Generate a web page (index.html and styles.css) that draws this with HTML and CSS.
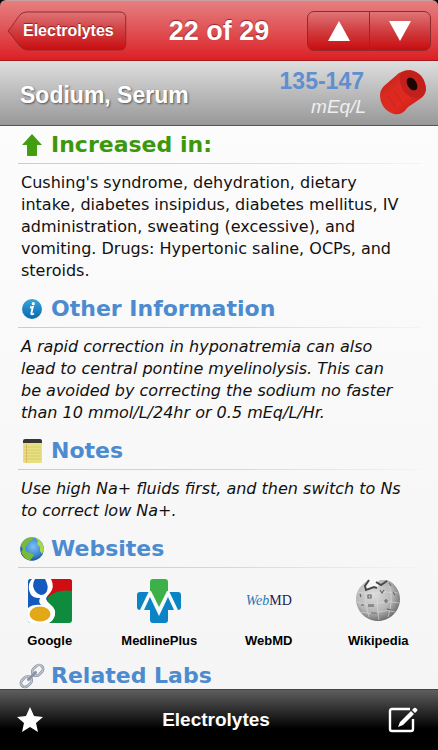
FILE: index.html
```html
<!DOCTYPE html>
<html lang="en">
<head>
    <meta charset="UTF-8">
    <meta name="viewport" content="width=device-width, initial-scale=1.0">
    <title>Sodium, Serum</title>
    <link rel="stylesheet" href="styles.css">
</head>
<body>
    <header class="navbar">
        <button class="back" type="button">
            <svg class="back-shape" viewBox="0 0 121 40" preserveAspectRatio="none" aria-hidden="true">
                <defs>
                    <linearGradient id="backFill" x1="0" y1="0" x2="0" y2="1">
                        <stop offset="0" stop-color="#df7476"/>
                        <stop offset="0.5" stop-color="#d13d40"/>
                        <stop offset="1" stop-color="#c90d10"/>
                    </linearGradient>
                </defs>
                <path d="M1 20C6 15 9 8 14 3Q17 1 20 1H114Q120 1 120 7V33Q120 39 114 39H20Q17 39 14 36C9 31 6 25 1 20Z" fill="url(#backFill)" stroke="#94292b" stroke-width="1"/>
            </svg>
            <span>Electrolytes</span>
        </button>
        <h1>22 of 29</h1>
        <div class="stepper">
            <button type="button" aria-label="Previous">
                <svg width="24" height="22" viewBox="0 0 24 22"><path d="M12 1L23 21H1Z" fill="#fff"/></svg>
            </button>
            <button type="button" aria-label="Next">
                <svg width="24" height="22" viewBox="0 0 24 22"><path d="M1 1H23L12 21Z" fill="#fff"/></svg>
            </button>
        </div>
    </header>

    <section class="lab">
        <h2>Sodium, Serum</h2>
        <div class="range">
            <strong>135-147</strong>
            <em>mEq/L</em>
        </div>
        <svg width="46" height="46" viewBox="0 0 46 46" aria-hidden="true">
            <defs>
                <linearGradient id="tubeFill" x1="0" y1="0" x2="1" y2="1">
                    <stop offset="0" stop-color="#b81c18"/>
                    <stop offset="0.35" stop-color="#d92a21"/>
                    <stop offset="0.6" stop-color="#e0291f"/>
                    <stop offset="1" stop-color="#b81613"/>
                </linearGradient>
            </defs>
            <path d="M0 26Q0 20 4 16L19 3Q24 0 30 0Q37 1 41 6Q46 13 46 20Q45 26 40 29L28 37Q25 41 22 43Q18 45 14 44Q7 42 3 36Q0 31 0 26Z" fill="url(#tubeFill)"/>
            <path d="M23 2C28 -1 37 1 42 7C47 14 47 24 41 27C34 30 26 26 22 18C19 11 19 5 23 2Z" fill="#c4201b"/>
            <path d="M8 26L16 38M14 21L23 34" stroke="#c4201b" stroke-width="1" opacity="0.6"/>
            <ellipse cx="32" cy="14" rx="4.500" ry="7" transform="rotate(-33 32 14)" fill="#1d0505"/>
        </svg>
    </section>

    <main class="content">
        <h3 class="heading increased">
            <svg class="icon" viewBox="0 0 24 24" aria-hidden="true">
                <path d="M12 1L22 12H17V22Q17 23 16 23H8Q7 23 7 22V12H2Z" fill="#429d10"/>
            </svg>
            Increased in:
        </h3>
        <p>Cushing's syndrome, dehydration, dietary intake, diabetes insipidus, diabetes mellitus, IV administration, sweating (excessive), and vomiting. Drugs: Hypertonic saline, OCPs, and steroids.</p>

        <h3 class="heading">
            <svg class="icon" viewBox="0 0 24 24" aria-hidden="true">
                <defs>
                    <linearGradient id="infoFill" x1="0" y1="0" x2="0" y2="1">
                        <stop offset="0" stop-color="#38a5dc"/>
                        <stop offset="1" stop-color="#0b67ad"/>
                    </linearGradient>
                </defs>
                <circle cx="12" cy="12" r="10" fill="url(#infoFill)"/>
                <circle cx="13.300" cy="6.700" r="1.600" fill="#fff"/>
                <path d="M10 10.500L12.800 10L11.300 16.500Q11.300 18 14 16.500" fill="none" stroke="#fff" stroke-width="1.900"/>
            </svg>
            Other Information
        </h3>
        <p class="note">A rapid correction in hyponatremia can also lead to central pontine myelinolysis. This can be avoided by correcting the sodium no faster than 10 mmol/L/24hr or 0.5 mEq/L/Hr.</p>

        <h3 class="heading">
            <svg class="icon" viewBox="0 0 24 24" aria-hidden="true">
                <rect x="3" y="1" width="19" height="23" rx="1.500" fill="#e8e07f"/>
                <path d="M4 8H21M4 11H21M4 14H21M4 17H21M4 20H21" stroke="#c9c56b" stroke-width="0.700"/>
                <path d="M6.500 5V24" stroke="#dda956" stroke-width="0.700"/>
                <path d="M3 4V2Q3 0 5 0H20Q22 0 22 2V4Z" fill="#393534"/>
            </svg>
            Notes
        </h3>
        <p class="note">Use high Na+ fluids first, and then switch to Ns to correct low Na+.</p>

        <h3 class="heading">
            <svg class="icon" viewBox="0 0 24 24" aria-hidden="true">
                <defs>
                    <radialGradient id="sea" cx="0.55" cy="0.4" r="0.6">
                        <stop offset="0" stop-color="#7dc2f3"/>
                        <stop offset="0.7" stop-color="#3782ce"/>
                        <stop offset="1" stop-color="#1b4c8d"/>
                    </radialGradient>
                </defs>
                <circle cx="12" cy="12" r="11.800" fill="url(#sea)"/>
                <path d="M2 6Q5 1 11 0.500L14 1L12 3L9 5L6 9L5 12L7 15L11 16L14 18L12 21L10 23.500Q4 22 1 15L3 12L1 9Z" fill="#79ba3b"/>
                <path d="M15 0.500Q20 2 23 8L24 13L22 17L20 14L20 10L17 7L18 4Z" fill="#a9d84f"/>
            </svg>
            Websites
        </h3>
        <nav class="sites">
            <a href="#">
                <svg width="44" height="44" viewBox="0 0 44 44" aria-hidden="true">
                    <defs><clipPath id="tile"><rect width="44" height="44" rx="3"/></clipPath></defs>
                    <g clip-path="url(#tile)">
                        <rect width="44" height="44" fill="#0f8b3d"/>
                        <path d="M20 0H44V12Q30 10 20 18Z" fill="#cf0d12"/>
                        <rect width="20" height="29" fill="#1459bd"/>
                        <path d="M4 0H23Q27 8 22 14Q18 18 18 20Q19 23 23 26Q28 30 27 36Q26 41 21 44H0V29Q5 25 13 26Q10 23 12 19Q3 20 1 11Q0 4 4 0Z" fill="#fff"/>
                        <path d="M7 0H17Q21 7 19 12Q17 16 13 16Q7 15 5 7Q5 3 7 0Z" fill="#1459bd"/>
                        <ellipse cx="12" cy="35" rx="10.500" ry="7.500" fill="#e3a818"/>
                    </g>
                </svg>
                Google
            </a>
            <a href="#">
                <svg width="44" height="44" viewBox="0 0 44 44" aria-hidden="true">
                    <path d="M3 13H41Q44 13 44 16V28Q44 31 41 31H31V41Q31 44 28 44H16Q13 44 13 41V31H3Q0 31 0 28V16Q0 13 3 13Z" fill="#0b84c6"/>
                    <path d="M16 0H28Q31 0 31 3V14L22 32L13 14V3Q13 0 16 0Z" fill="#3cb14a"/>
                    <path d="M3 31L12 12H14L22 28L30 12H32L41 31H37L31 18L22 37L13 18L7 31Z" fill="#f9f9f9"/>
                </svg>
                MedlinePlus
            </a>
            <a href="#">
                <span class="webmd" aria-hidden="true"><i>Web</i>MD</span>
                WebMD
            </a>
            <a href="#">
                <svg width="44" height="44" viewBox="0 0 44 44" aria-hidden="true">
                    <defs>
                        <radialGradient id="ball" cx="0.4" cy="0.35" r="0.7">
                            <stop offset="0" stop-color="#dedede"/>
                            <stop offset="0.6" stop-color="#b6b6b6"/>
                            <stop offset="1" stop-color="#656565"/>
                        </radialGradient>
                    </defs>
                    <path d="M12 2L9 7L11 11L17 8L21 9L23 6L20 4L24 1L31 1C39 4 44 12 44 20C44 32 34 42 22 42C10 42 0 32 0 20C0 12 5 5 12 2Z" fill="url(#ball)"/>
                    <path d="M2 13Q10 16 20 14T42 14M1 23Q12 27 22 24T43 24M5 33Q14 36 23 33T39 33M10 10Q8 22 13 38M22 11Q20 24 23 41M33 5Q38 20 32 38" fill="none" stroke="#ddd" stroke-width="0.600"/>
                    <path d="M13 1L9 7L10 11L18 8L21 9M20 3L25 6L31 2" fill="none" stroke="#484848" stroke-width="2"/>
                    <path d="M4 15L5 18M12 16H15V19H12ZM24 11L26 14L28 11M13 25V28M17 25V28M15 25V28M28 22H32M30 20V24M5 26H8M15 34H21M31 30L35 31M37 13L39 16M33 4L35 7" fill="none" stroke="#666" stroke-width="1.200"/>
                </svg>
                Wikipedia
            </a>
        </nav>

        <h3 class="heading">
            <svg class="icon" viewBox="0 0 24 24" aria-hidden="true">
                <g transform="rotate(-45 12 12)" fill="none">
                    <rect x="-2" y="8" width="12" height="8" rx="4" stroke="#7d8699" stroke-width="2.600"/>
                    <rect x="14" y="8" width="12" height="8" rx="4" stroke="#7d8699" stroke-width="2.600"/>
                    <rect x="-2" y="8" width="12" height="8" rx="4" stroke="#c8ced9" stroke-width="1.300"/>
                    <rect x="14" y="8" width="12" height="8" rx="4" stroke="#c8ced9" stroke-width="1.300"/>
                    <path d="M7 12H17" stroke="#8a92a4" stroke-width="3" stroke-linecap="round"/>
                </g>
            </svg>
            Related Labs
        </h3>
    </main>

    <footer class="toolbar">
        <button type="button" aria-label="Favorite">
            <svg width="28" height="28" viewBox="0 0 28 28"><path d="M14 1L18 10L27 11L20 17L22 26L14 21L6 26L8 17L1 11L10 10Z" fill="#fff"/></svg>
        </button>
        <span>Electrolytes</span>
        <button type="button" aria-label="Edit">
            <svg width="30" height="28" viewBox="0 0 30 28">
                <path d="M22 3H4Q2 3 2 5V23Q2 25 4 25H23Q25 25 25 23V13" fill="none" stroke="#fff" stroke-width="2.400"/>
                <path d="M10 21L12 16L23 5L26 8L15 19ZM24 4L26 2Q27 1 29 3Q30 4 29 5L27 7Z" fill="#fff"/>
            </svg>
        </button>
    </footer>
</body>
</html>
```
FILE: styles.css
```css
* {
    box-sizing: border-box;
}
body {
    margin: 0;
    height: 100vh;
    display: flex;
    flex-direction: column;
    overflow: hidden;
    background: #000;
    font-family: "Liberation Sans", Arial, sans-serif;
}
h1, h2, h3, p {
    margin: 0;
}
button {
    padding: 0;
    border: none;
    background: none;
    color: white;
    font-family: inherit;
    cursor: pointer;
}
svg {
    display: block;
    flex-shrink: 0;
}

/* top bar */
.navbar {
    flex-shrink: 0;
    display: grid;
    grid-template-columns: 1fr auto 1fr;
    align-items: center;
    height: 61px;
    padding: 0 7px;
    border-top: 1px solid #c9a0a0;
    border-bottom: 1px solid #a51a1c;
    border-radius: 6px 6px 0 0;
    background: linear-gradient(#e67f80, #e05154 50%, #dc2024);
    color: white;
}
.navbar h1 {
    font-size: 27px;
    line-height: 32px;
    text-shadow: 0 -1px 1px rgba(90, 0, 0, 0.6);
}
.back {
    position: relative;
    justify-self: start;
    height: 40px;
    padding: 0 13px 0 16px;
    font-size: 16px;
    font-weight: bold;
    text-shadow: 0 -1px 1px rgba(90, 0, 0, 0.6);
}
.back-shape {
    position: absolute;
    inset: 0;
    width: 100%;
    height: 100%;
}
.back span {
    position: relative;
}
.stepper {
    justify-self: end;
    display: flex;
    height: 40px;
    border: 1px solid #94292b;
    border-radius: 7px;
    background: linear-gradient(#df7476, #d13d40 50%, #c90d10);
}
.stepper button {
    display: flex;
    align-items: center;
    justify-content: center;
    width: 61px;
}
.stepper button + button {
    border-left: 1px solid #94292b;
}

/* lab title */
.lab {
    flex-shrink: 0;
    display: flex;
    align-items: center;
    height: 65px;
    padding: 0 12px 0 20px;
    border-bottom: 1px solid #555;
    background: linear-gradient(#dedede, #989898);
}
.lab h2 {
    flex: 1;
    padding-top: 4px;
    color: white;
    font-size: 23px;
    text-shadow: 1px 1px 2px #555;
}
.range {
    display: flex;
    flex-direction: column;
    align-items: flex-end;
    margin-right: 14px;
}
.range strong {
    padding-right: 2px;
    color: #608fd0;
    font-size: 23px;
    line-height: 28px;
}
.range em {
    color: #efefef;
    font-size: 19px;
    line-height: 24px;
}

/* sections */
.content {
    flex: 1;
    min-height: 0;
    overflow: hidden;
    padding: 0 18px;
    background: linear-gradient(#fcfcfc, #f5f5f5);
}
.heading {
    display: flex;
    align-items: center;
    gap: 7px;
    height: 38px;
    padding: 1px 0 0 2px;
    border-bottom: 1px solid;
    border-image: linear-gradient(to right, #ccc, #d6d6d6 50%, #f4f4f4) 1;
    color: #4c8bcf;
    font-family: "DejaVu Sans", Verdana, sans-serif;
    font-size: 22px;
    line-height: 28px;
}
.icon {
    width: 24px;
    height: 24px;
    overflow: visible;
}
.increased {
    color: #3c980b;
}
.content p {
    padding: 8px 15px 8px 3px;
    color: #111;
    font-family: "DejaVu Sans", Verdana, sans-serif;
    font-size: 16px;
    line-height: 22px;
}
.content .note {
    font-style: italic;
}
.sites {
    display: grid;
    grid-template-columns: repeat(4, 1fr);
    margin: 0 -13px 0 -23px;
    padding: 11px 0 7px;
}
.sites a {
    display: flex;
    flex-direction: column;
    align-items: center;
    gap: 9px;
    color: #000;
    font-size: 13px;
    font-weight: bold;
    line-height: 18px;
    text-decoration: none;
}
.webmd {
    height: 44px;
    color: #1c2350;
    font-family: "Liberation Serif", "Times New Roman", serif;
    font-size: 14px;
    font-weight: normal;
    line-height: 44px;
}
.webmd i {
    color: #2378b8;
}

/* bottom bar */
.toolbar {
    flex-shrink: 0;
    display: flex;
    align-items: center;
    justify-content: space-between;
    height: 61px;
    padding: 0 20px 0 16px;
    border-top: 1px solid #444;
    background: linear-gradient(#5e5e5e, #000 65%);
    color: white;
    font-size: 19px;
    font-weight: bold;
}
```
